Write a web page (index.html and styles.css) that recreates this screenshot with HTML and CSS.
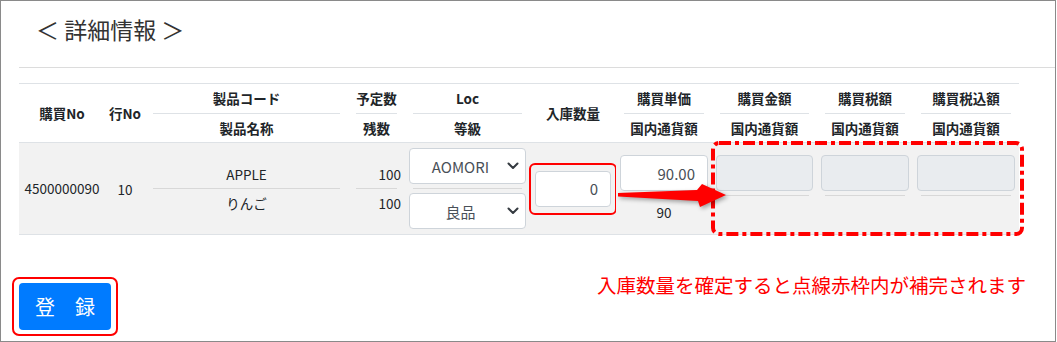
FILE: index.html
```html
<!DOCTYPE html>
<html lang="ja">
<head>
  <meta charset="UTF-8">
  <meta name="viewport" content="width=device-width, initial-scale=1">
  <title>詳細情報</title>
  <link rel="stylesheet" href="styles.css">
</head>
<body>
  <div class="frame">
    <h2 class="title">＜ 詳細情報 ＞</h2>
    <div class="rule"></div>

    <div class="grid-wrap">
      <table class="detail">
        <colgroup>
          <col class="w-po">
          <col class="w-line">
          <col class="w-item">
          <col class="w-qty">
          <col class="w-loc">
          <col class="w-in">
          <col class="w-price">
          <col class="w-amt">
          <col class="w-tax">
          <col class="w-total">
        </colgroup>
        <thead>
          <tr>
            <th class="tight">購買No</th>
            <th class="tight">行No</th>
            <th><div class="h-top">製品コード</div><div class="h-bot">製品名称</div></th>
            <th><div class="h-top">予定数</div><div class="h-bot">残数</div></th>
            <th><div class="h-top">Loc</div><div class="h-bot">等級</div></th>
            <th>入庫数量</th>
            <th><div class="h-top">購買単価</div><div class="h-bot">国内通貨額</div></th>
            <th><div class="h-top">購買金額</div><div class="h-bot">国内通貨額</div></th>
            <th><div class="h-top">購買税額</div><div class="h-bot">国内通貨額</div></th>
            <th><div class="h-top">購買税込額</div><div class="h-bot">国内通貨額</div></th>
          </tr>
        </thead>
        <tbody>
          <tr>
            <td><div class="solo">4500000090</div></td>
            <td>10</td>
            <td>
              <div class="p-top">APPLE</div>
              <hr class="split">
              <div class="p-bot">りんご</div>
            </td>
            <td class="num">
              <div class="p-top">100</div>
              <hr class="split">
              <div class="p-bot">100</div>
            </td>
            <td class="loc">
              <div class="p-top">
                <div class="pick">
                  <select><option>AOMORI</option></select>
                  <svg class="chev" viewBox="0 0 12 8"><path d="M1.5 1.5 L6 6 L10.5 1.5"/></svg>
                </div>
              </div>
              <hr class="split">
              <div class="p-bot">
                <div class="pick">
                  <select><option>良品</option></select>
                  <svg class="chev" viewBox="0 0 12 8"><path d="M1.5 1.5 L6 6 L10.5 1.5"/></svg>
                </div>
              </div>
            </td>
            <td>
              <div class="mark"><input class="field" type="text" value="0"></div>
            </td>
            <td>
              <div class="m-top"><input class="field" type="text" value="90.00"></div>
              <hr class="split">
              <div class="m-bot">90</div>
            </td>
            <td>
              <div class="m-top"><input class="field" type="text" disabled></div>
              <hr class="split">
              <div class="m-bot"></div>
            </td>
            <td>
              <div class="m-top"><input class="field" type="text" disabled></div>
              <hr class="split">
              <div class="m-bot"></div>
            </td>
            <td>
              <div class="m-top"><input class="field" type="text" disabled></div>
              <hr class="split">
              <div class="m-bot"></div>
            </td>
          </tr>
        </tbody>
      </table>

      <!-- 補完される範囲の注記 -->
      <svg class="dash" viewBox="0 0 313 95">
        <rect x="2" y="2" width="309" height="91" rx="6" ry="6"/>
      </svg>
      <svg class="arrow" viewBox="0 0 120 34">
        <polygon points="6,13 85,10 90,4 114,15 88,27 86,21 6,16.5"/>
      </svg>
    </div>

    <div class="foot">
      <div class="btn-mark">
        <button class="btn" type="button">登　録</button>
      </div>
      <p class="note">入庫数量を確定すると点線赤枠内が補完されます</p>
    </div>
  </div>
</body>
</html>
```

FILE: styles.css
```css
* {
  box-sizing: border-box;
}

body {
  margin: 0;
  font-family: "Noto Sans CJK JP", "Noto Sans", sans-serif;
  color: #212529;
  background: #fff;
}

.frame {
  width: 1056px;
  height: 342px;
  border: 1px solid #8a8a8a;
  overflow: hidden;
}

.title {
  margin: 0;
  padding: 11px 0 0 35px;
  font-size: 23px;
  line-height: 34px;
  font-weight: 400;
  color: #333;
}

.rule {
  margin: 21px 0 0 18px;
  border-top: 1px solid #dcdcdc;
}

.grid-wrap {
  position: relative;
  width: 1000px;
  margin: 15px 0 0 18px;
}

/* table */
.detail {
  width: 1000px;
  table-layout: fixed;
  border-collapse: collapse;
  font-size: 13.5px;
}

.w-po { width: 86px; }
.w-line { width: 40px; }
.w-item { width: 203px; }
.w-qty { width: 57px; }
.w-loc { width: 125px; }
.w-in { width: 86px; }
.w-price { width: 96px; }
.w-amt { width: 105px; }
.w-tax { width: 96px; }
.w-total { width: 106px; }

.detail th {
  padding: 0 8px;
  border-top: 1px solid #dee2e6;
  border-bottom: 1px solid #dee2e6;
  font-weight: 700;
  text-align: center;
  vertical-align: middle;
  white-space: nowrap;
}

.detail th.tight {
  padding: 0;
}

.h-top {
  height: 30px;
  line-height: 29px;
  border-bottom: 1px solid #dee2e6;
}

.h-bot {
  height: 28px;
  line-height: 28px;
}

.detail td {
  padding: 0 4px;
  background: #f2f2f2;
  border-bottom: 1px solid #dee2e6;
  text-align: center;
  vertical-align: middle;
}

.solo {
  height: 91px;
  line-height: 91px;
}

.split {
  height: 0;
  margin: 0 4px;
  border: 0;
  border-top: 1px solid #d8d8d8;
}

.p-top,
.p-bot {
  padding: 4px 0;
  line-height: 20px;
}

.num .p-top,
.num .p-bot {
  text-align: right;
}

.loc .p-top {
  padding: 0 0 4px;
}

.loc .p-bot {
  padding: 4px 0 0;
}

/* form parts */
.pick {
  position: relative;
}

.pick select {
  display: block;
  width: 100%;
  height: 36px;
  padding: 0 24px 0 10px;
  border: 1px solid #ced4da;
  border-radius: 4px;
  background: #fff;
  font-family: inherit;
  font-size: 15px;
  color: #495057;
  text-align: center;
  text-align-last: center;
  appearance: none;
  -webkit-appearance: none;
}

.chev {
  position: absolute;
  right: 7px;
  top: 50%;
  width: 12px;
  height: 8px;
  margin-top: -4px;
  fill: none;
  stroke: #343a40;
  stroke-width: 2;
  stroke-linecap: round;
  stroke-linejoin: round;
}

.field {
  display: block;
  width: 100%;
  height: 36px;
  padding: 0 12px;
  border: 1px solid #ced4da;
  border-radius: 4px;
  background: #fff;
  font-family: inherit;
  font-size: 15px;
  color: #495057;
  text-align: right;
}

.field:disabled {
  background: #e9ecef;
}

.mark {
  margin: 0 -5px;
  padding: 6px 4px;
  border: 2px solid #f00;
  border-radius: 6px;
}

.m-top {
  padding-bottom: 4px;
}

.m-bot {
  height: 26px;
  padding-top: 6px;
  line-height: 20px;
}

/* annotations */
.dash {
  position: absolute;
  left: 692px;
  top: 58px;
  width: 313px;
  height: 95px;
  fill: none;
  stroke: #f00;
  stroke-width: 4;
  stroke-dasharray: 12 4 4 4;
}

.arrow {
  position: absolute;
  left: 593px;
  top: 97px;
  width: 120px;
  height: 34px;
  fill: #f00;
  filter: drop-shadow(2px 2px 2px rgba(0, 0, 0, 0.35));
}

/* footer */
.foot {
  display: flex;
  align-items: flex-start;
  margin-top: 36px;
  padding-left: 11px;
}

.btn-mark {
  margin-top: 6px;
  padding: 4px 5px;
  border: 2px solid #f00;
  border-radius: 7px;
}

.btn {
  display: block;
  width: 92px;
  height: 47px;
  border: 0;
  border-radius: 4px;
  background: #007bff;
  color: #fff;
  font-family: inherit;
  font-size: 20px;
  cursor: pointer;
}

.note {
  margin: 0 29px 0 auto;
  font-size: 19.5px;
  line-height: 28px;
  color: #f00;
}
```
